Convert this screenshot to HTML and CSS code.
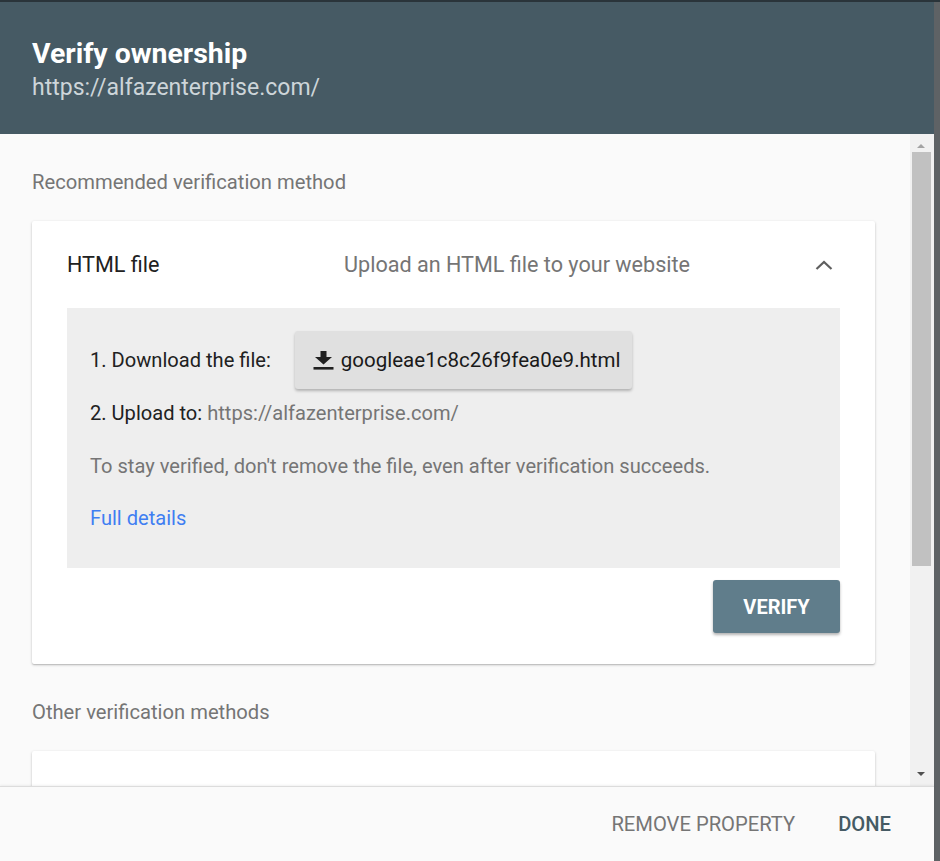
FILE: index.html
```html
<!DOCTYPE html>
<html>
<head>
<meta charset="utf-8">
<link rel="stylesheet" href="styles.css">
</head>
<body>
<div class="screen">
  <div class="dialog">
    <header class="dlg-header">
      <div class="dlg-title">Verify ownership</div>
      <div class="dlg-sub">https://alfazenterprise.com/</div>
    </header>
    <div class="dlg-scroll">
      <div class="dlg-content">
        <div class="section-label">Recommended verification method</div>
        <div class="card">
          <div class="card-head">
            <div class="method-name">HTML file</div>
            <div class="method-desc">Upload an HTML file to your website</div>
            <svg class="chevron" width="18" height="10" viewBox="0 0 18 10"><path d="M1.5 9 L9 2 L16.5 9" fill="none" stroke="#5f5f5f" stroke-width="2.2"/></svg>
          </div>
          <div class="panel">
            <div class="step step-dl">
              <span class="step-text">1. Download the file:</span>
              <button class="dl-btn">
                <svg class="dl-icon" width="21" height="19" viewBox="0 0 21 19"><path d="M7.5 0 H13.5 V6 H19 L10.5 13.5 L2 6 H7.5 Z" fill="#212121"/><rect x="0.5" y="16" width="20" height="2.6" fill="#212121"/></svg>
                <span>googleae1c8c26f9fea0e9.html</span>
              </button>
            </div>
            <div class="step">2. Upload to: <span class="muted">https://alfazenterprise.com/</span></div>
            <div class="step note">To stay verified, don't remove the file, even after verification succeeds.</div>
            <div class="step"><a class="link" href="#">Full details</a></div>
          </div>
          <div class="card-actions">
            <button class="verify-btn">VERIFY</button>
          </div>
        </div>
        <div class="section-label other">Other verification methods</div>
        <div class="card card-stub"></div>
      </div>
      <div class="scrollbar">
        <div class="sb-arrow sb-up"></div>
        <div class="sb-track"><div class="sb-thumb"></div></div>
        <div class="sb-arrow sb-down"></div>
      </div>
    </div>
    <footer class="dlg-footer">
      <button class="txt-btn remove">REMOVE PROPERTY</button>
      <button class="txt-btn done">DONE</button>
    </footer>
  </div>
  <div class="backdrop-edge"></div>
</div>
</body>
</html>
```

FILE: styles.css
```css
* { box-sizing: border-box; }
html, body { margin: 0; padding: 0; }
body {
  width: 940px;
  height: 861px;
  overflow: hidden;
  font-family: Roboto, "Noto Sans", Arial, sans-serif;
  background: #5e6265;
}
.screen {
  display: flex;
  width: 940px;
  height: 861px;
  border-top: 2px solid #2a343a;
}
.dialog {
  width: 934px;
  height: 859px;
  display: flex;
  flex-direction: column;
  background: #fafafa;
}
.backdrop-edge { flex: 1; background: #5e6265; }

.dlg-header {
  height: 132px;
  flex: none;
  background: #465a64;
  padding: 35px 32px 0 32px;
}
.dlg-title {
  color: #ffffff;
  font-size: 28.4px;
  font-weight: 700;
  line-height: 34px;
}
.dlg-sub {
  color: #cdd5d9;
  font-size: 23px;
  line-height: 28px;
  margin-top: 3px;
}

.dlg-scroll {
  flex: 1;
  display: flex;
  overflow: hidden;
  min-height: 0;
}
.dlg-content {
  flex: 1;
  padding: 36px 35px 0 32px;
  overflow: hidden;
}
.section-label {
  color: #757575;
  font-size: 20.2px;
  line-height: 24px;
}
.section-label.other { margin-top: 36px; }

.card {
  background: #ffffff;
  margin-top: 27px;
  border-radius: 2px;
  box-shadow: 0 1px 3px rgba(0,0,0,0.2), 0 1px 1px rgba(0,0,0,0.12);
}
.card-stub { height: 60px; }
.card-head {
  height: 87px;
  display: flex;
  align-items: center;
  padding: 0 42px 0 35px;
}
.method-name {
  width: 277px;
  color: #212121;
  font-size: 21.6px;
}
.method-desc {
  flex: 1;
  color: #757575;
  font-size: 21.6px;
}
.chevron { display: block; }

.panel {
  margin: 0 35px;
  background: #eeeeee;
  padding: 23px 23px 38px 23px;
  height: 260px;
}
.step {
  color: #212121;
  font-size: 20.1px;
  line-height: 24px;
  margin-top: 12px;
}
.step.note { color: #757575; margin-top: 29px; }
.step-dl {
  margin-top: 0;
  display: flex;
  align-items: center;
  gap: 24px;
}
.muted { color: #757575; }
.link { color: #3f7ef2; text-decoration: none; }
.step:last-child { margin-top: 28px; }

.dl-btn {
  height: 58px;
  width: 337px;
  display: flex;
  align-items: center;
  gap: 7px;
  padding: 0 0 0 18px;
  border: none;
  border-radius: 3px;
  background: #e0e0e0;
  box-shadow: 0 2px 3px rgba(0,0,0,0.25);
  color: #1a1a1a;
  font-family: inherit;
  font-size: 20.5px;
  font-weight: 400;
}
.dl-icon { display: block; flex: none; }

.card-actions {
  display: flex;
  justify-content: flex-end;
  padding: 12px 35px 31px 0;
}
.verify-btn {
  width: 127px;
  height: 53px;
  border: none;
  border-radius: 3px;
  background: #607d8b;
  color: #ffffff;
  font-family: inherit;
  font-size: 20px;
  font-weight: 700;
  box-shadow: 0 2px 3px rgba(0,0,0,0.3);
}

.scrollbar {
  width: 24px;
  flex: none;
  background: #f1f1f1;
  display: flex;
  flex-direction: column;
  padding: 0 3px 0 2px;
}
.sb-arrow { height: 18px; flex: none; position: relative; }
.sb-up::after {
  content: "";
  position: absolute;
  left: 5px; top: 10px;
  border-left: 4px solid transparent;
  border-right: 4px solid transparent;
  border-bottom: 4px solid #a3a3a3;
}
.sb-down::after {
  content: "";
  position: absolute;
  left: 5px; top: 4px;
  border-left: 4px solid transparent;
  border-right: 4px solid transparent;
  border-top: 4px solid #505050;
}
.sb-track { flex: 1; }
.sb-thumb {
  height: 414px;
  background: #c1c1c1;
}

.dlg-footer {
  height: 75px;
  flex: none;
  border-top: 1px solid #dcdcdc;
  box-shadow: 0 -1px 2px rgba(0,0,0,0.06);
  background: #fafafa;
  display: flex;
  align-items: center;
  justify-content: flex-end;
  gap: 43px;
  padding: 0 43px 0 0;
  position: relative;
}
.txt-btn {
  border: none;
  background: none;
  padding: 0;
  font-family: inherit;
  font-size: 20.2px;
}
.remove { color: #757575; }
.done { color: #455a64; font-weight: 500; }
```
